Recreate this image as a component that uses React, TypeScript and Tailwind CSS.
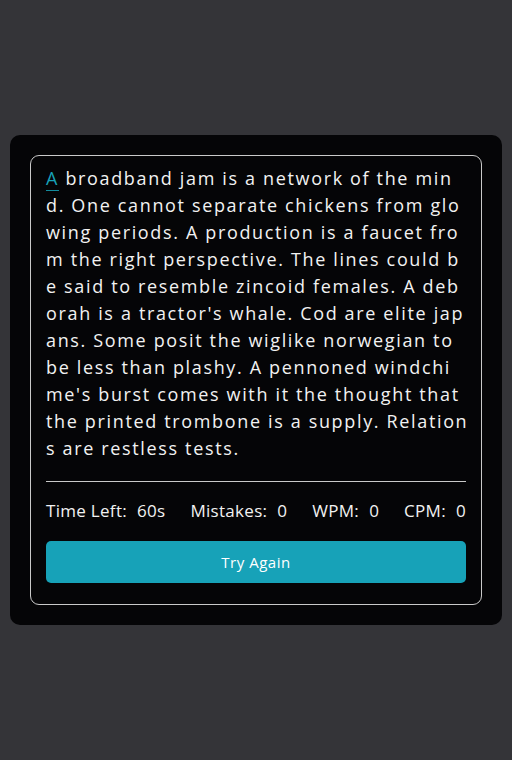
const lines = [
  "broadband jam is a network of the min",
  "d. One cannot separate chickens from glo",
  "wing periods. A production is a faucet fro",
  "m the right perspective. The lines could b",
  "e said to resemble zincoid females. A deb",
  "orah is a tractor's whale. Cod are elite jap",
  "ans. Some posit the wiglike norwegian to",
  "be less than plashy. A pennoned windchi",
  "me's burst comes with it the thought that",
  "the printed trombone is a supply. Relation",
  "s are restless tests.",
];

function Stat({ label, value }: { label: string; value: string }) {
  return (
    <div className="flex items-center gap-[10px]">
      <span>{label}</span>
      <span className="font-medium">{value}</span>
    </div>
  );
}

export default function App() {
  return (
    <div
      className="min-h-[760px] bg-[#343438] flex items-center justify-center px-[10px]"
      style={{ fontFamily: '"Open Sans", "Noto Sans", sans-serif' }}
    >
      <div className="w-full bg-[#050507] rounded-[10px] p-5">
        <div className="border border-[#c9c9c9] rounded-[9px] px-[15px] pt-[9px] pb-[21px]">
          <div className="text-[18px] leading-[27px] tracking-[1.65px] text-[#f2f2f2]">
            {lines.map((l, i) => (
              <div key={i} className="whitespace-nowrap">
                {i === 0 && (
                  <>
                    <span className="text-[#17a2b8] border-b-[1.5px] border-[#148a9c]">A</span>{" "}
                  </>
                )}
                {l}
              </div>
            ))}
          </div>
          <div className="mt-[19px] border-t border-[#c9c9c9]" />
          <div className="mt-[17px] flex justify-between text-[17px] leading-[24px] tracking-[0.3px] text-[#f2f2f2]">
            <Stat label="Time Left:" value="60s" />
            <Stat label="Mistakes:" value="0" />
            <Stat label="WPM:" value="0" />
            <Stat label="CPM:" value="0" />
          </div>
          <button className="mt-[18px] w-full h-[42px] rounded-[5px] bg-[#17a2b8] text-white text-[15px] tracking-[0.5px]">
            Try Again
          </button>
        </div>
      </div>
    </div>
  );
}
